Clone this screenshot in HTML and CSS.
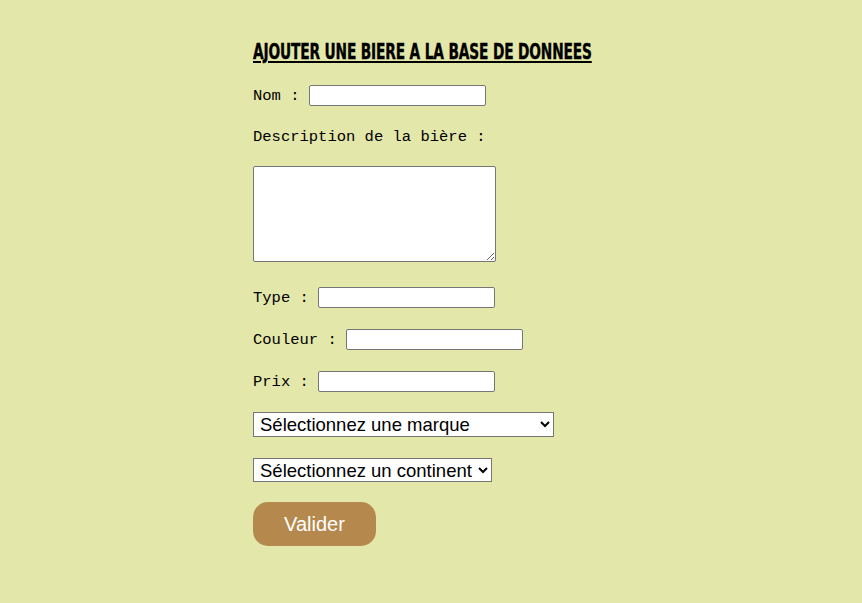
FILE: index.html
```html
<!DOCTYPE html>
<html lang="fr">
<head>
<meta charset="utf-8">
<title>Ajouter une bière</title>
<link rel="stylesheet" href="styles.css">
</head>
<body>
<form class="form">
  <h1 class="title"><span class="title-text">AJOUTER UNE BIERE A LA BASE DE DONNEES</span></h1>
  <div class="row row-nom"><label class="lbl">Nom :</label><input class="field" type="text"></div>
  <div class="row row-desc"><label class="lbl">Description de la bière :</label></div>
  <textarea class="area"></textarea>
  <div class="row row-type"><label class="lbl">Type :</label><input class="field" type="text"></div>
  <div class="row row-std"><label class="lbl">Couleur :</label><input class="field" type="text"></div>
  <div class="row row-std"><label class="lbl">Prix :</label><input class="field" type="text"></div>
  <select class="sel sel-marque"><option>Sélectionnez une marque</option></select>
  <select class="sel sel-continent"><option>Sélectionnez un continent</option></select>
  <button class="btn" type="button">Valider</button>
</form>
</body>
</html>
```
FILE: styles.css
```css
html, body {
  margin: 0;
  padding: 0;
  background: #e3e7a9;
}
body {
  height: 603px;
  overflow: hidden;
}
.form {
  display: flex;
  flex-direction: column;
  align-items: flex-start;
  padding-left: 253px;
  padding-top: 40px;
}
.title {
  margin: 0;
  height: 24px;
  width: 338px;
  font-family: Impact, "DejaVu Sans", sans-serif;
  font-weight: bold;
  font-stretch: condensed;
  font-size: 21.5px;
  line-height: 24px;
  color: #000;
  white-space: nowrap;
}
.title-text {
  display: inline-block;
  transform: scaleX(0.71);
  transform-origin: left center;
  text-decoration: underline;
  text-decoration-thickness: 2px;
  text-underline-offset: 2px;
  letter-spacing: -0.2px;
  -webkit-text-stroke: 0.4px #000;
}
.row {
  display: flex;
  align-items: center;
  height: 21px;
  margin-top: 21px;
}
.row-nom { margin-top: 21px; }
.row-desc { margin-top: 20px; }
.row-type { margin-top: 25px; }
.lbl {
  font-family: "Liberation Mono", "DejaVu Sans Mono", monospace;
  font-size: 15.5px;
  color: #000;
  margin-right: 9.3px;
}
.field {
  box-sizing: border-box;
  width: 177px;
  height: 21px;
  margin: 0;
  border: 1px solid #767676;
  border-radius: 2px;
  background: #fff;
  padding: 1px 2px;
}
.area {
  box-sizing: border-box;
  width: 243px;
  height: 96px;
  margin: 19px 0 0;
  border: 1px solid #767676;
  border-radius: 2px;
  background: #fff;
}
.sel {
  box-sizing: border-box;
  margin: 20px 0 0;
  font-family: "Liberation Sans", Arial, sans-serif;
  font-size: 18.5px;
  color: #000;
  background: #fff;
  border: 1px solid #767676;
  border-radius: 0;
  height: 25px;
  padding: 0 0 0 2px;
}
.sel-marque { width: 301px; }
.sel-continent { margin-top: 21px; height: 24px; width: 239px; }
.btn {
  margin-top: 20px;
  width: 123px;
  height: 44px;
  border: none;
  border-radius: 15px;
  background: #b5894e;
  color: #fff;
  font-family: "Liberation Sans", Arial, sans-serif;
  font-size: 20px;
  padding: 0;
}
```
